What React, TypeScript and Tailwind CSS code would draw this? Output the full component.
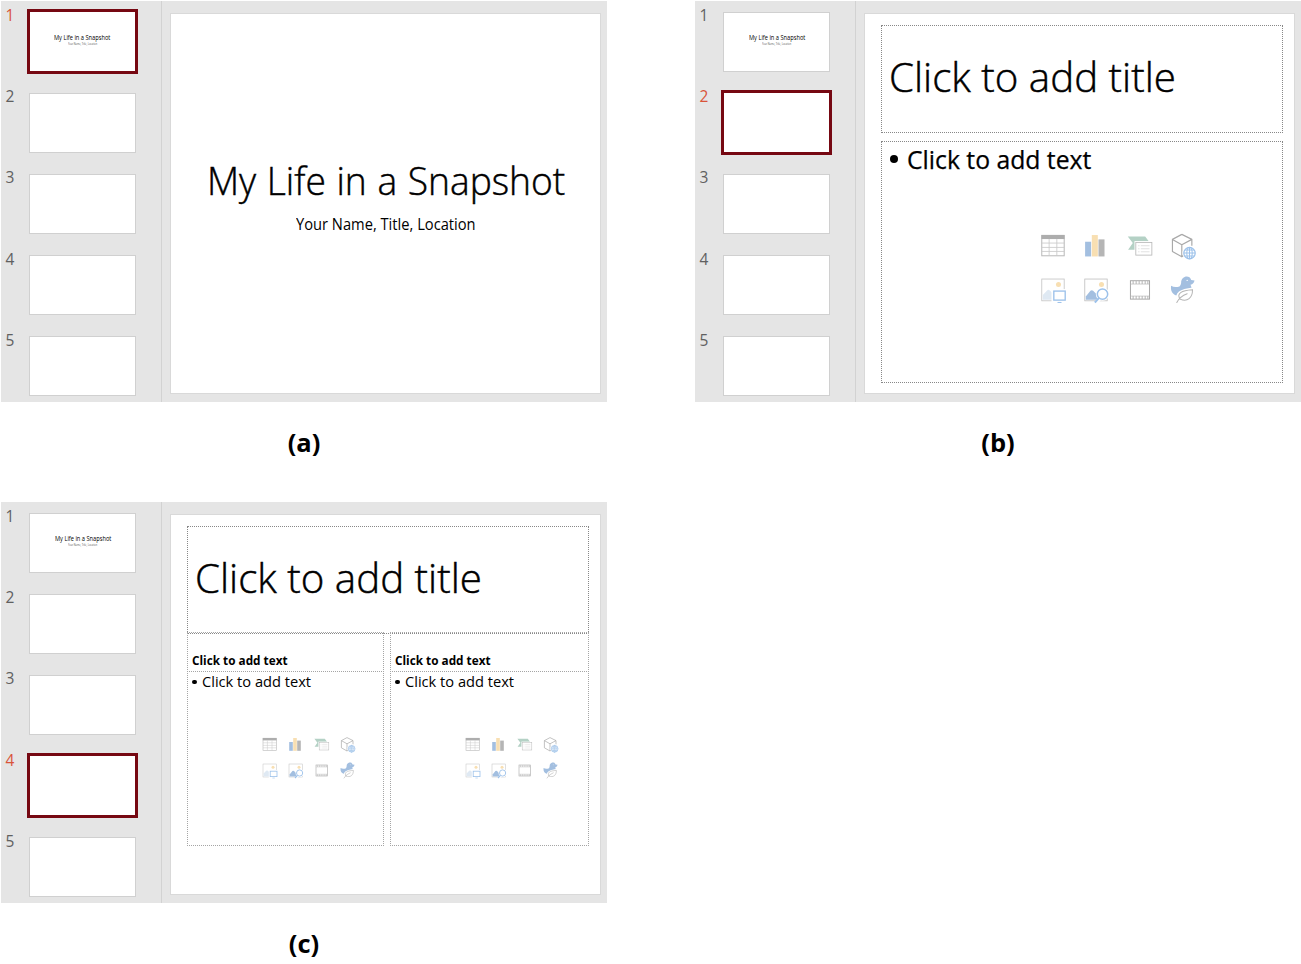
import { useLayoutEffect, useRef, useState } from 'react';
import type { ReactNode } from 'react';

const SANS = "font-['Open_Sans','Noto_Sans',sans-serif]";

/** Single line of text condensed horizontally to fill its box. */
function FitText({ children, className }: { children: string; className: string }) {
  const box = useRef<HTMLDivElement>(null);
  const line = useRef<HTMLSpanElement>(null);
  const [scale, setScale] = useState(1);
  useLayoutEffect(() => {
    if (box.current && line.current) {
      setScale(box.current.clientWidth / line.current.offsetWidth);
    }
  }, []);
  return (
    <div ref={box} className={`shrink-0 whitespace-nowrap text-black ${className}`}>
      <span ref={line} className="inline-block origin-left" style={{ transform: `scaleX(${scale})` }}>
        {children}
      </span>
    </div>
  );
}

const BLUE = '#a3bfe0';
const SAND = '#f8dfb2';
const GREY = '#b8b8b8';
const SKY = '#9cc1ea';

function Cell({ children }: { children: ReactNode }) {
  return (
    <svg viewBox="0 0 130 130" className="block h-full w-full" fill="none">
      {children}
    </svg>
  );
}

function ContentIcons({ className }: { className: string }) {
  return (
    <div className={`grid grid-cols-4 grid-rows-2 ${className}`}>
      <Cell>
        <rect x="35" y="31" width="67" height="61" stroke={GREY} strokeWidth="3" />
        <rect x="34" y="30" width="69" height="12" fill="#adadad" />
        <path d="M57 42v50M80 42v50M35 54h67M35 67h67M35 79h67" stroke="#c9c9c9" strokeWidth="2.5" />
      </Cell>
      <Cell>
        <rect x="36" y="50" width="18" height="44" fill={BLUE} />
        <rect x="56" y="30" width="18" height="64" fill={SAND} />
        <rect x="76" y="43" width="18" height="51" fill="#b5b5b5" />
      </Cell>
      <Cell>
        <path d="M32 34H84L94 48V74H33L47 54Z" fill="#b4d1c5" />
        <rect x="52" y="48" width="54" height="46" fill="#fff" />
        <rect x="56" y="52" width="48" height="38" stroke={GREY} strokeWidth="2.5" />
        <path d="M63 62h4M71 62h26M63 71h4M71 71h26M63 80h4M71 80h26" stroke="#d0d0d0" strokeWidth="2" />
      </Cell>
      <Cell>
        <path d="M65 28L95 43V62M65 28L37 43V79L65 95V59L37 43M65 59L95 43M65 95L71 91" stroke="#a9a9a9" strokeWidth="3.5" strokeLinejoin="round" />
        <circle cx="88" cy="84" r="21" fill="#fff" />
        <circle cx="88" cy="84" r="17" stroke={SKY} strokeWidth="3.5" />
        <ellipse cx="88" cy="84" rx="8" ry="17" stroke={SKY} strokeWidth="3" />
        <path d="M88 67v34M71 84h34M74 75h28M74 93h28" stroke={SKY} strokeWidth="3" />
      </Cell>
      <Cell>
        <rect x="35" y="30" width="67" height="65" stroke="#c4c4c4" strokeWidth="2.5" />
        <circle cx="85" cy="46" r="7.5" fill={SAND} />
        <path d="M38 92V78L51 64Q55 60 59 64L68 73V92Z" fill="#dfe9f3" />
        <rect x="64" y="60" width="46" height="42" fill="#fff" />
        <rect x="71" y="66" width="34" height="27" stroke={SKY} strokeWidth="4" />
        <path d="M82 100h12" stroke={SKY} strokeWidth="3" />
      </Cell>
      <Cell>
        <rect x="35" y="30" width="67" height="65" stroke="#c0c0c0" strokeWidth="2.5" />
        <circle cx="85" cy="46" r="7.5" fill={SAND} />
        <path d="M38 92V82L52 65Q56 62 60 65L72 77L74 92Z" fill={BLUE} />
        <circle cx="88" cy="75" r="20" fill="#fff" />
        <path d="M80 89L65 104" stroke="#fff" strokeWidth="11" />
        <circle cx="88" cy="75" r="15.5" stroke={SKY} strokeWidth="4.5" />
        <path d="M77 87L65 100" stroke={SKY} strokeWidth="6" />
      </Cell>
      <Cell>
        <rect x="40" y="35" width="57" height="55" stroke="#a9a9a9" strokeWidth="3" />
        <path d="M40 45h57M40 81h57" stroke="#b5b5b5" strokeWidth="2" />
        <path d="M48 36v9M57 36v9M66 36v9M75 36v9M84 36v9M92 36v9M48 81v9M57 81v9M66 81v9M75 81v9M84 81v9M92 81v9" stroke="#b5b5b5" strokeWidth="3" />
      </Cell>
      <Cell>
        <path d="M33 50Q44 57 58 52Q62 49 63 42C62 20 89 16 93 33L103 34Q101 44 91 47C97 61 98 74 84 81L48 79C35 74 31 62 33 50Z" fill={BLUE} />
        <circle cx="81" cy="34" r="2" fill="#fff" />
        <path d="M54 96C44 73 61 62 98 58C99 88 82 101 61 91Z" fill="#fff" stroke="#fff" strokeWidth="6" />
        <path d="M60 90C48 73 64 64 97 62C97 86 82 100 60 90M50 100Q59 82 81 74" stroke="#b5b5b5" strokeWidth="3" strokeLinecap="round" />
      </Cell>
    </div>
  );
}

function Thumb({ index, selected, titled }: { index: number; selected: boolean; titled: boolean }) {
  return (
    <li className="flex h-[81.1px] items-start">
      <span
        className={`-mt-[8.3px] w-[28px] pl-[4.5px] text-[15.5px] leading-[24px] ${SANS} ${
          selected ? 'text-[#d9543a]' : 'text-[#606060]'
        }`}
      >
        {index}
      </span>
      <div
        className={
          selected
            ? '-mt-[2.4px] -ml-[2px] h-[64.5px] w-[110.5px] border-[3px] border-[#760812] bg-white pt-[20.5px]'
            : 'h-[60px] w-[107px] border border-[#d0d0d0] bg-white pt-[20px]'
        }
      >
        {titled && (
          <div className="flex flex-col items-center">
            <FitText className={`w-[56px] text-[6.5px] leading-[9px] ${SANS}`}>My Life in a Snapshot</FitText>
            <FitText className={`w-[29px] text-[2.8px] leading-[5px] opacity-70 ${SANS}`}>Your Name, Title, Location</FitText>
          </div>
        )}
      </div>
    </li>
  );
}

function Panel({ label, selected, children }: { label: string; selected: number; children: ReactNode }) {
  return (
    <figure className="h-[501px] w-[606px]">
      <div className="flex h-[401.4px] bg-[#e5e5e5]">
        <ol className="w-[161px] shrink-0 border-r border-[#d2d2d2] pt-[10.6px]">
          {[1, 2, 3, 4, 5].map((n) => (
            <Thumb key={n} index={n} selected={n === selected} titled={n === 1} />
          ))}
        </ol>
        <div className="mt-[12px] ml-[8px] h-[381px] w-[431px] border border-[#d9d9d9] bg-white">{children}</div>
      </div>
      <figcaption className={`pt-[22.6px] text-center text-[25.5px] leading-[34px] font-bold text-black ${SANS}`}>{label}</figcaption>
    </figure>
  );
}

function TitlePlaceholder() {
  return (
    <div className="flex h-[108px] w-[402px] items-center border border-dotted border-[#888] pb-[4px] pl-[7px]">
      <FitText className={`w-[287px] text-[40px] leading-[56px] font-light [-webkit-text-stroke:0.45px_black] ${SANS}`}>
        Click to add title
      </FitText>
    </div>
  );
}

function SplitColumn({ className }: { className: string }) {
  return (
    <div className={className}>
      <div className="h-[40px] border border-dotted border-[#a5a5a5] pt-[19px] pl-[3.5px]">
        <FitText className={`w-[96px] text-[12.5px] leading-[17px] font-bold ${SANS}`}>Click to add text</FitText>
      </div>
      <div className="-mt-px h-[175px] border border-dotted border-[#a5a5a5] pt-px pl-[4px]">
        <div className="flex items-center">
          <span className="mr-[5.5px] h-[4.5px] w-[4.5px] rounded-full bg-black" />
          <FitText className={`w-[109px] text-[14.5px] leading-[18px] ${SANS}`}>Click to add text</FitText>
        </div>
        <ContentIcons className="mt-[41px] ml-[64px] h-[52px] w-[104px]" />
      </div>
    </div>
  );
}

export default function App() {
  return (
    <main className="grid h-[964px] w-[1301px] grid-cols-[606px_606px] content-start gap-x-[88px] overflow-hidden bg-white pt-px pl-px">
      <Panel label="(a)" selected={1}>
        <div className="flex flex-col items-center pt-[139px]">
          <FitText
            className={`ml-[1px] w-[358px] text-[38px] leading-[54px] font-light [word-spacing:1px] [-webkit-text-stroke:0.45px_black] ${SANS}`}
          >
            My Life in a Snapshot
          </FitText>
          <FitText className={`mt-[5.5px] w-[180px] text-[15.5px] leading-[22px] ${SANS}`}>Your Name, Title, Location</FitText>
        </div>
      </Panel>
      <Panel label="(b)" selected={2}>
        <div className="flex flex-col pt-[11px] pl-[16px]">
          <TitlePlaceholder />
          <div className="mt-[8px] h-[242px] w-[402px] border border-dotted border-[#888] pl-[8px]">
            <div className="flex items-center">
              <span className="mr-[9.5px] h-[7.5px] w-[7.5px] rounded-full bg-black" />
              <FitText className={`w-[184px] text-[25px] leading-[34px] [-webkit-text-stroke:0.25px_black] ${SANS}`}>
                Click to add text
              </FitText>
            </div>
            <ContentIcons className="mt-[49px] ml-[139.5px] h-[87px] w-[174.5px]" />
          </div>
        </div>
      </Panel>
      <Panel label="(c)" selected={4}>
        <div className="flex flex-col pt-[11px] pl-[16px]">
          <TitlePlaceholder />
          <div className="-mt-[2px] flex gap-[6px]">
            <SplitColumn className="w-[197px]" />
            <SplitColumn className="w-[199px]" />
          </div>
        </div>
      </Panel>
    </main>
  );
}
